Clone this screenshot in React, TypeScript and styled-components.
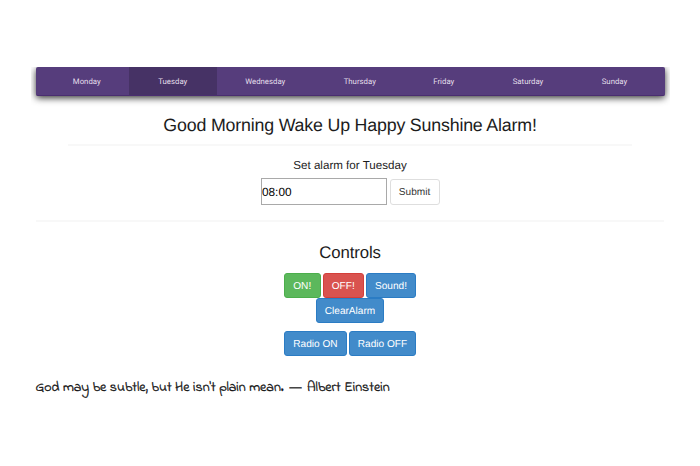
import React from 'react';
import styled, { createGlobalStyle } from 'styled-components';

const GlobalStyle = createGlobalStyle`
  * { box-sizing: border-box; text-rendering: geometricPrecision; }
  body {
    margin: 0;
    background: #fff;
    color: #1c1c1c;
    font-family: "Liberation Sans", Arial, sans-serif;
    overflow: hidden;
  }
`;

const Page = styled.main`
  width: 700px;
  height: 466px;
  padding-top: 67px;
  display: flex;
  flex-direction: column;
  background: #fff;
`;

const NavFrame = styled.div`
  flex: none;
  width: 639px;
  height: 44px;
  margin-left: 31px;
  padding: 0 5px 0 4.5px;
  overflow: hidden;
`;

const Nav = styled.nav`
  display: flex;
  height: 29px;
  border-radius: 2px;
  background: #563d7c;
  border-bottom: 1px solid #4a2d70;
  box-shadow: 0 2px 7px 0 rgba(0, 0, 0, 0.8);
`;

const Day = styled.a<{ $width: number; $inset?: number; $active?: boolean }>`
  width: ${(p) => p.$width}px;
  padding-left: ${(p) => p.$inset ?? 0}px;
  flex: none;
  line-height: 29px;
  text-align: center;
  font-family: Roboto, sans-serif;
  font-size: 7.8px;
  color: #e4dfeb;
  background: ${(p) => (p.$active ? '#463265' : 'transparent')};
`;

const Title = styled.h1`
  margin: 3px 68px 0;
  height: 32px;
  border-bottom: 2px solid #f8f8f8;
  font-size: 17.8px;
  font-weight: 400;
  letter-spacing: -0.18px;
  line-height: 22px;
  text-align: center;
  white-space: nowrap;
`;

const AlarmForm = styled.form`
  margin: 0 36px;
  height: 76px;
  padding-top: 12px;
  border-bottom: 2px solid #f8f8f8;
  display: flex;
  flex-direction: column;
  align-items: center;
`;

const Label = styled.label`
  font-size: 11.6px;
  line-height: 15px;
  margin-bottom: 5px;
`;

const Fields = styled.div`
  display: flex;
  align-items: flex-end;
  gap: 3px;
`;

const TimeInput = styled.input`
  width: 126px;
  height: 27px;
  padding: 0 0 0 0.5px;
  border: 1px solid #a9a9a9;
  border-radius: 0;
  background: #fff;
  color: #000;
  font: 11.8px "Liberation Sans", Arial, sans-serif;
  outline: none;
`;

const SubmitButton = styled.button`
  width: 50px;
  height: 26px;
  padding: 1px 0 0;
  border: 1px solid #dedede;
  border-radius: 3px;
  background: #fff;
  color: #333;
  font: 10.1px "Liberation Sans", Arial, sans-serif;
`;

const Controls = styled.section`
  display: flex;
  flex-direction: column;
  align-items: center;
  padding-top: 20px;
`;

const Heading = styled.h2`
  margin: 0 0 9px;
  font-size: 16.8px;
  letter-spacing: -0.1px;
  font-weight: 400;
  line-height: 22px;
`;

const ButtonRow = styled.div<{ $gap?: number }>`
  display: flex;
  gap: 2px;
  margin-bottom: ${(p) => p.$gap ?? 0}px;
`;

const tones = {
  green: ['#5cb85c', '#4cae4c'],
  red: ['#d9534f', '#d43f3a'],
  blue: ['#428bca', '#2b7cc4'],
};

const ControlButton = styled.button<{ $tone: keyof typeof tones; $width: number }>`
  width: ${(p) => p.$width}px;
  height: 25px;
  padding: 1px 0 0;
  border: 1px solid ${(p) => tones[p.$tone][1]};
  border-radius: 3px;
  background: ${(p) => tones[p.$tone][0]};
  color: #fff;
  font: 10.1px "Liberation Sans", Arial, sans-serif;
  white-space: nowrap;
`;

const Quote = styled.p`
  margin: 22px 0 0 35.5px;
  font-family: "Indie Flower", "Comic Neue", Lato, cursive;
  font-size: 14px;
  line-height: 20px;
  color: #111;
  -webkit-text-stroke: 0.35px #111;
  white-space: nowrap;
`;

const Dash = styled.span`
  margin: 0 2px 0 2.3px;
  font-family: "Liberation Sans", Arial, sans-serif;
  font-size: 12px;
  line-height: 1;
`;

const days = [
  { name: 'Monday', width: 93.5, inset: 9 },
  { name: 'Tuesday', width: 87.5 },
  { name: 'Wednesday', width: 97.5 },
  { name: 'Thursday', width: 91.5 },
  { name: 'Friday', width: 76.5 },
  { name: 'Saturday', width: 92 },
  { name: 'Sunday', width: 81 },
];

export default function App() {
  return (
    <>
      <GlobalStyle />
      <Page>
        <NavFrame>
          <Nav>
            {days.map((d) => (
              <Day key={d.name} $width={d.width} $inset={d.inset} $active={d.name === 'Tuesday'}>
                {d.name}
              </Day>
            ))}
          </Nav>
        </NavFrame>
        <Title>Good Morning Wake Up Happy Sunshine Alarm!</Title>
        <AlarmForm>
          <Label htmlFor="alarm">Set alarm for Tuesday</Label>
          <Fields>
            <TimeInput id="alarm" defaultValue="08:00" />
            <SubmitButton type="button">Submit</SubmitButton>
          </Fields>
        </AlarmForm>
        <Controls>
          <Heading>Controls</Heading>
          <ButtonRow>
            <ControlButton $tone="green" $width={36.5}>ON!</ControlButton>
            <ControlButton $tone="red" $width={41.5}>OFF!</ControlButton>
            <ControlButton $tone="blue" $width={50}>Sound!</ControlButton>
          </ButtonRow>
          <ButtonRow $gap={8}>
            <ControlButton $tone="blue" $width={68.5}>ClearAlarm</ControlButton>
          </ButtonRow>
          <ButtonRow>
            <ControlButton $tone="blue" $width={63}>Radio ON</ControlButton>
            <ControlButton $tone="blue" $width={67}>Radio OFF</ControlButton>
          </ButtonRow>
        </Controls>
        <Quote>
          God may be subtle, but He isn't plain mean. <Dash>—</Dash> Albert Einstein
        </Quote>
      </Page>
    </>
  );
}
